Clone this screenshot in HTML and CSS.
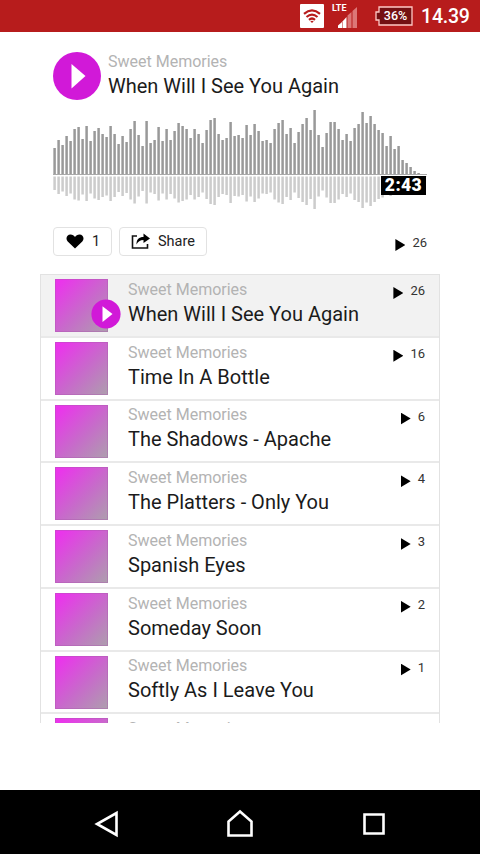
FILE: index.html
```html
<!DOCTYPE html>
<html lang="en">
<head>
<meta charset="utf-8">
<title>Sweet Memories</title>
<link rel="stylesheet" href="styles.css">
</head>
<body>
<header class="status">
  <svg class="wifi" viewBox="0 0 24 24"><rect width="24" height="24" rx="1" fill="#fff"/><g fill="none" stroke="#b71c1c" stroke-width="2.200"><path d="M4 9.800Q12 3 20 9.800"/><path d="M6.500 13Q12 8.300 17.500 13"/><path d="M9 15.800Q12 13.200 15 15.800"/></g><path d="M10.300 17.300Q12 16 13.700 17.300L12 19z" fill="#b71c1c"/></svg>
  <div class="signal"><span class="lte">LTE</span>
    <svg viewBox="0 0 26 26"><path d="M6 25V22.500L10 19V25z" fill="#fff"/><path d="M10.500 25V18.500L14.500 14V25z" fill="#fff"/><path d="M15.500 25V12.500L19.500 9V25zM20.500 25V8L25 4V25z" fill="#dc7777"/></svg>
  </div>
  <div class="battery"><svg viewBox="0 0 38 20"><path d="M4 1H37V19H4V14H1V6H4z" fill="#741012" stroke="#ffc9c5" stroke-width="1.300"/></svg><span>36%</span></div>
  <time class="clock">14.39</time>
</header>
<main class="player">
  <section class="hero">
    <svg class="play-big" viewBox="0 0 48 48"><circle cx="24" cy="24" r="24" fill="#d119d8"/><path d="M18.500 12L32.500 24L18.500 36.500z" fill="#fff"/></svg>
    <div class="names"><div class="artist">Sweet Memories</div><h1 class="title">When Will I See You Again</h1></div>
  </section>
  <div class="wave"><svg id="wave" viewBox="0 0 374 102"></svg><span class="duration">2:43</span></div>
  <div class="actions">
    <button class="btn like"><svg viewBox="0 0 18 15"><path d="M9 14.500L1.700 7.500C-.8 4.800.8.5 4.500.5C6.600.5 8 1.500 9 3C10 1.500 11.400.5 13.500.5C17.200.5 18.800 4.800 16.300 7.500z"/></svg>1</button>
    <button class="btn share"><svg viewBox="0 0 20 16"><path d="M6 3H1.500V15H16.500V11" fill="none" stroke="#111" stroke-width="1.600"/><path d="M5.500 11.500C5.500 6 8 4 12.500 4V.5L19 5.500L12.500 10V7C9 7 7 8.500 5.500 11.500z"/></svg>Share</button>
    <span class="plays"><i class="tri"></i>26</span>
  </div>
  <ol class="list">
    <li class="row current"><div class="thumb"><svg class="play-small" viewBox="0 0 30 30"><circle cx="15" cy="15" r="14.600" fill="#d119d8"/><path d="M11.500 7.200L21.500 15L11.500 23z" fill="#fff"/></svg></div><div class="names"><div class="artist">Sweet Memories</div><div class="title">When Will I See You Again</div></div><span class="plays"><i class="tri"></i>26</span></li>
    <li class="row"><div class="thumb"></div><div class="names"><div class="artist">Sweet Memories</div><div class="title">Time In A Bottle</div></div><span class="plays"><i class="tri"></i>16</span></li>
    <li class="row"><div class="thumb"></div><div class="names"><div class="artist">Sweet Memories</div><div class="title">The Shadows - Apache</div></div><span class="plays"><i class="tri"></i>6</span></li>
    <li class="row"><div class="thumb"></div><div class="names"><div class="artist">Sweet Memories</div><div class="title">The Platters - Only You</div></div><span class="plays"><i class="tri"></i>4</span></li>
    <li class="row"><div class="thumb"></div><div class="names"><div class="artist">Sweet Memories</div><div class="title">Spanish Eyes</div></div><span class="plays"><i class="tri"></i>3</span></li>
    <li class="row"><div class="thumb"></div><div class="names"><div class="artist">Sweet Memories</div><div class="title">Someday Soon</div></div><span class="plays"><i class="tri"></i>2</span></li>
    <li class="row"><div class="thumb"></div><div class="names"><div class="artist">Sweet Memories</div><div class="title">Softly As I Leave You</div></div><span class="plays"><i class="tri"></i>1</span></li>
    <li class="row"><div class="thumb"></div><div class="names"><div class="artist">Sweet Memories</div></div></li>
  </ol>
</main>
<nav class="navbar">
  <svg viewBox="0 0 28 30"><path d="M23.500 4V26L4 15z"/></svg>
  <svg viewBox="0 0 28 30"><path d="M2.500 26.500V12.500L14 2.500L25.500 12.500V26.500z"/></svg>
  <svg viewBox="0 0 28 30"><path d="M4.500 5.500H23.500V24.500H4.500z"/></svg>
</nav>
<script src="script.js"></script>
</body>
</html>
```
FILE: styles.css
```css
* { box-sizing: border-box; }
body { margin: 0; width: 480px; height: 854px; display: flex; flex-direction: column; overflow: hidden; background: #fff; color: #1b1b1b; font-family: Roboto, "Liberation Sans", sans-serif; }
svg { display: block; flex: none; }
.status { height: 32px; flex: none; background: #b71c1c; color: #fff; display: flex; align-items: center; padding-left: 300px; }
.wifi { width: 24px; height: 24px; }
.signal { position: relative; width: 28px; height: 26px; margin-left: 8px; }
.signal svg { width: 26px; height: 26px; }
.lte { position: absolute; left: 0; top: 1px; font-size: 9px; line-height: 9px; font-weight: 700; }
.battery { position: relative; width: 38px; height: 20px; margin-left: 15px; }
.battery svg { width: 38px; height: 20px; }
.battery span { position: absolute; left: 3px; right: 0; top: 0; text-align: center; font-size: 12.500px; line-height: 20px; font-weight: 500; }
.clock { margin-left: 8px; padding-top: 2px; font-size: 19.500px; line-height: 30px; font-weight: 500; letter-spacing: -.2px; }
.player { flex: none; width: 400px; height: 691px; margin-left: 40px; padding-top: 20px; overflow: hidden; }
.hero { display: flex; height: 57px; padding-left: 13px; }
.play-big { width: 48px; height: 48px; margin: 0 7px 0 0; }
.artist { font-size: 16px; line-height: 20px; color: #b3b3b3; white-space: nowrap; }
.title { margin: 0; font-size: 20px; line-height: 28px; font-weight: 400; white-space: nowrap; }
.wave { position: relative; height: 102px; margin-left: 13px; width: 374px; }
.wave svg { width: 374px; height: 102px; }
.duration { position: absolute; right: 1px; bottom: 16px; width: 45px; height: 19px; background: #000; color: #fff; font-size: 17.500px; line-height: 19px; font-weight: 900; letter-spacing: .4px; text-align: center; }
.actions { display: flex; align-items: flex-start; height: 63px; padding: 16px 13px 0; }
.btn { height: 29px; display: flex; align-items: center; border: 1px solid #e2e2e2; border-radius: 4px; background: #fff; color: #222; padding: 0; font: 14.500px/20px Roboto, sans-serif; }
.btn svg { margin-top: -1px; }
.like { width: 59px; padding-left: 12px; gap: 8px; margin-right: 7px; }
.like svg { width: 18px; height: 15px; }
.share { width: 88px; padding-left: 11px; gap: 7px; }
.share svg { width: 20px; height: 16px; }
.plays { display: flex; align-items: center; margin-left: auto; gap: 7px; font-size: 13px; line-height: 18px; color: #333; }
.actions .plays { margin-top: 7px; }
.tri { width: 10px; height: 12px; margin-top: 4px; background: #000; clip-path: polygon(0 0, 100% 50%, 0 100%); }
.list { margin: 0; padding: 0; list-style: none; border: 1px solid #e2e2e2; border-bottom: 0; }
.row { height: 62.750px; display: flex; align-items: flex-start; padding: 4px 14px 0 14px; border-bottom: 2px solid #e9e9e9; }
.current { background: #f2f2f2; }
.thumb { position: relative; width: 53px; height: 53px; margin-right: 20px; flex: none; background: linear-gradient(135deg, #ea35eb 8%, #c76bca 55%, #ad9fad); box-shadow: inset 0 0 0 1px #a957ac66; }
.play-small { position: absolute; left: 35.500px; top: 20px; width: 30px; height: 30px; }
.row .artist { margin-top: .8px; }
.row .plays { margin-top: 3px; }
.navbar { margin-top: auto; height: 64px; flex: none; background: #000; display: flex; justify-content: center; align-items: center; gap: 105.500px; padding-top: 4px; }
.navbar svg { width: 28px; height: 30px; fill: none; stroke: #fff; stroke-width: 2.600; }
```
FILE: script.js
```js
const heights = [27,35,30,39,34,46,48,36,49,34,44,47,41,38,49,41,31,39,33,46,54,40,29,54,32,35,48,34,46,35,44,
  52,49,46,37,46,41,32,45,55,57,41,35,37,53,39,40,37,50,40,51,44,34,35,32,46,52,55,41,47,32,43,51,
  57,45,65,40,28,42,53,53,46,35,41,34,47,51,63,52,59,51,45,42,29,39,26,29,15,12,8,4,2,1,1];
const base = 66;
const bars = (sign, scale, offset) =>
  heights.map((h, i) => `M${1.6 + i * 4} ${base + offset}v${sign * h * scale}`).join("");
document.getElementById("wave").innerHTML =
  `<path d="${bars(-1, 1, 0)}" stroke="#999" stroke-width="2.5"/>` +
  `<path d="${bars(1, 0.5, 1.5)}" stroke="#ccc" stroke-width="2.5"/>` +
  `<path d="M0 65.500H374" stroke="#aaa" stroke-width="1"/>`;
```
